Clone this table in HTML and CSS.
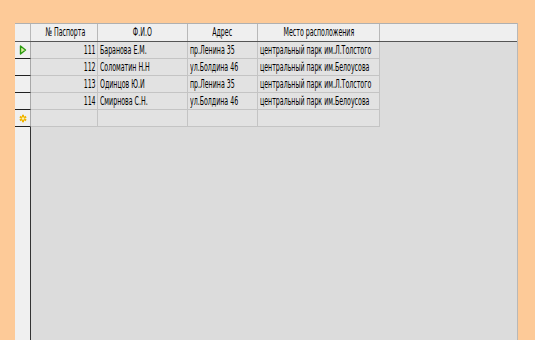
FILE: index.html
```html
<!DOCTYPE html>
<html>
<head>
<meta charset="utf-8">
<link rel="stylesheet" href="styles.css">
</head>
<body>
<div class="grid">
  <div class="hrow">
    <div class="sel hsel"></div>
    <div class="hc c1"><span class="t">№ Паспорта</span></div>
    <div class="hc c2"><span class="t">Ф.И.О</span></div>
    <div class="hc c3"><span class="t">Адрес</span></div>
    <div class="hc c4"><span class="t">Место расположения</span></div>
    <div class="hc rest"></div>
  </div>
  <div class="row">
    <div class="sel"><svg class="ico" width="8" height="10" viewBox="0 0 8 10"><path d="M1.5 1 L6.5 5 L1.5 9 Z" fill="#d8f0a0" stroke="#2a9a10" stroke-width="1.4" stroke-linejoin="round"/></svg></div>
    <div class="c c1 num"><span class="t">111</span></div>
    <div class="c c2"><span class="t">Баранова Е.М.</span></div>
    <div class="c c3"><span class="t">пр.Ленина 35</span></div>
    <div class="c c4"><span class="t">центральный парк им.Л.Толстого</span></div>
  </div>
  <div class="row">
    <div class="sel"></div>
    <div class="c c1 num"><span class="t">112</span></div>
    <div class="c c2"><span class="t">Соломатин Н.Н</span></div>
    <div class="c c3"><span class="t">ул.Болдина 46</span></div>
    <div class="c c4"><span class="t">центральный парк им.Белоусова</span></div>
  </div>
  <div class="row">
    <div class="sel"></div>
    <div class="c c1 num"><span class="t">113</span></div>
    <div class="c c2"><span class="t">Одинцов Ю.И</span></div>
    <div class="c c3"><span class="t">пр.Ленина 35</span></div>
    <div class="c c4"><span class="t">центральный парк им.Л.Толстого</span></div>
  </div>
  <div class="row">
    <div class="sel"></div>
    <div class="c c1 num"><span class="t">114</span></div>
    <div class="c c2"><span class="t">Смирнова С.Н.</span></div>
    <div class="c c3"><span class="t">ул.Болдина 46</span></div>
    <div class="c c4"><span class="t">центральный парк им.Белоусова</span></div>
  </div>
  <div class="row">
    <div class="sel"><svg class="ico" width="8" height="9" viewBox="0 0 8 9"><path d="M4 0.8 L4 8.2 M0.9 2.6 L7.1 6.4 M7.1 2.6 L0.9 6.4" stroke="#f0b400" stroke-width="2"/><circle cx="4" cy="4.5" r="1.3" fill="#fff4a8"/></svg></div>
    <div class="c c1"></div>
    <div class="c c2"></div>
    <div class="c c3"></div>
    <div class="c c4"></div>
  </div>
  <div class="filler">
    <div class="sel fsel"></div>
  </div>
</div>
</body>
</html>
```

FILE: styles.css
```css
html, body {
  margin: 0;
  padding: 0;
  height: 100%;
}
body {
  background: #fdca98;
  padding: 23px 17px 0 15px;
  box-sizing: border-box;
  font-family: "DejaVu Sans Condensed", "DejaVu Sans", sans-serif;
  font-stretch: condensed;
  font-size: 12px;
  color: #000;
}
.grid {
  height: 100%;
  background: #dcdcdc;
  border-right: 1px solid #b8b8b8;
  display: flex;
  flex-direction: column;
}
.hrow {
  display: flex;
  height: 19px;
  border-top: 1px solid #b0b0b0;
  border-bottom: 1px solid #555;
  box-sizing: border-box;
  background: #efefef;
}
.hc {
  box-sizing: border-box;
  border-right: 1px solid #b8b8b8;
  text-align: center;
  line-height: 17px;
  white-space: nowrap;
}
.hc .t {
  transform-origin: center;
}
.hc.rest {
  flex: 1;
  border-right: none;
}
.t {
  display: inline-block;
  transform: scaleX(0.58);
  transform-origin: left center;
}
.sel {
  width: 16px;
  flex: none;
  box-sizing: border-box;
  background: #f0f0f0;
  border-right: 1px solid #a8a8a8;
  display: flex;
  align-items: center;
  justify-content: center;
}
.hsel {
  border-right: 1px solid #b8b8b8;
}
.c1 { width: 67px; }
.c2 { width: 90px; }
.c3 { width: 70px; }
.c4 { width: 122px; }
.row {
  display: flex;
  height: 17px;
}
.row .sel {
  border-bottom: 1px solid #222;
}
.c {
  box-sizing: border-box;
  background: #e2e2e2;
  border-right: 1px solid #c4c4c4;
  border-bottom: 1px solid #c4c4c4;
  padding: 0 2px;
  line-height: 16px;
  white-space: nowrap;
  overflow: hidden;
}
.num {
  text-align: right;
  padding-right: 1px;
}
.num .t {
  transform-origin: right center;
}
.filler {
  flex: 1;
  display: flex;
}
.fsel {
  border-right: 1px solid #333;
}
.ico {
  display: block;
}
```
